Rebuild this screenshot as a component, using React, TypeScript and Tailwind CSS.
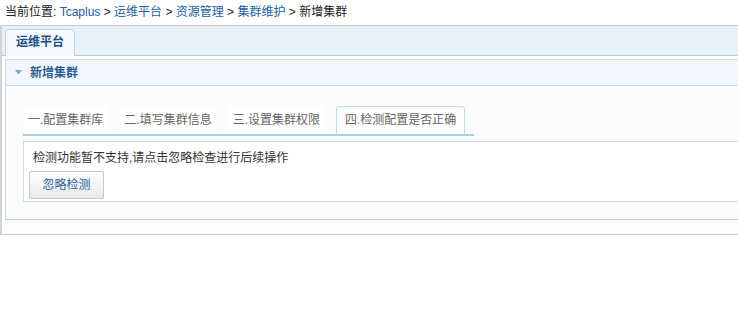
import React from "react";

const font = { fontFamily: '"Liberation Sans", "Noto Sans CJK SC", sans-serif' };

function Crumb({ children }: { children: React.ReactNode }) {
  return <a className="text-[#23609f] no-underline">{children}</a>;
}

export default function App() {
  const steps = ["一.配置集群库", "二.填写集群信息", "三.设置集群权限"];
  return (
    <div className="w-[738px] h-[329px] overflow-hidden bg-white text-[12px] text-[#333]" style={font}>
      {/* breadcrumb */}
      <div className="h-[25px] leading-[25px] pl-[5px] text-[#222] whitespace-nowrap">
        当前位置: <Crumb>Tcaplus</Crumb> &gt; <Crumb>运维平台</Crumb> &gt; <Crumb>资源管理</Crumb> &gt;{" "}
        <Crumb>集群维护</Crumb> &gt; 新增集群
      </div>

      {/* outer frame */}
      <div className="w-[760px] border-t border-t-[#c4c8d8] border-l-2 border-l-[#d4d4d4] border-b border-b-[#cccccc] bg-[#fdfdfb]">
        {/* tab bar */}
        <div className="h-[30px] bg-[#e6f1f8] border-b border-b-[#c0c8d8] pl-[3px] flex items-end">
          <div className="h-[27px] -mb-px px-[10px] bg-[#f4f9fe] border border-[#bcd2e6] border-b-0 rounded-t-[4px] leading-[25px] font-bold text-[#1f4f84]">
            运维平台
          </div>
        </div>

        <div className="h-[3px] bg-white" />

        {/* panel */}
        <div className="ml-[3px] border-t border-l border-t-[#d0dcea] border-l-[#c4dcec] border-b border-b-[#a8cce8]">
          <div className="h-[26px] bg-[#f2f7fe] border-b border-b-[#c4dcec] flex items-center pl-[9px]">
            <svg width="7" height="5" viewBox="0 0 7 5" className="mr-[8px]">
              <path d="M0 0 L7 0 L3.5 4.5 Z" fill="#7fa9cf" />
            </svg>
            <span className="font-bold text-[#2b5d92]">新增集群</span>
          </div>

          <div className="bg-[#fbfdfd] pl-[17px] pt-[20px] pb-[17px]">
            <div className="inline-flex items-end border-b-2 border-b-[#a8d0e8] pr-[9px]">
              {steps.map((s) => (
                <div key={s} className="h-[28px] mr-[11px] px-[5px] bg-white leading-[28px] text-[#666] whitespace-nowrap">
                  {s}
                </div>
              ))}
              <div className="h-[28px] px-[8px] bg-white border border-[#b8dcec] border-b-0 rounded-t-[4px] leading-[26px] text-[#666] whitespace-nowrap">
                四.检测配置是否正确
              </div>
            </div>

            <div className="mt-[5px] bg-white border border-[#c8dcf6] border-r-0 pl-[5px] pt-[6px] pb-[2px]">
              <div className="pl-[4px] leading-[20px] text-[#333]">检测功能暂不支持,请点击忽略检查进行后续操作</div>
              <button
                className="mt-[3px] w-[75px] h-[28px] border border-[#c8c8c8] rounded-[2px] bg-gradient-to-b from-[#ffffff] to-[#e9e9e9] text-[#2d5f9a] text-[12px]"
                style={font}
              >
                忽略检测
              </button>
            </div>
          </div>
        </div>
        <div className="h-[14px]" />
      </div>
    </div>
  );
}
